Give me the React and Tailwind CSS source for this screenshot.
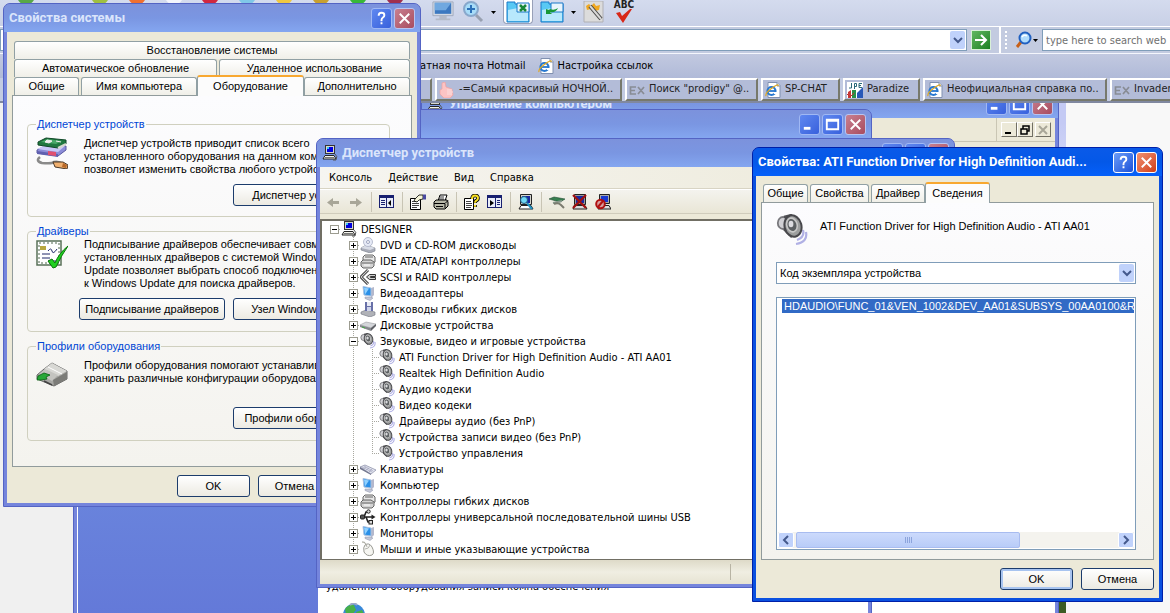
import React from "react";

const TAHOMA = "font-['DejaVu_Sans_Condensed','DejaVu_Sans',sans-serif]";

/* ---------- icons ---------- */

function Svg({ size = 16, box = 16, className = "", children }) {
  return (
    <svg width={size} height={size} viewBox={`0 0 ${box} ${box}`} className={`shrink-0 ${className}`} aria-hidden="true">
      {children}
    </svg>
  );
}

const ComputerIcon = ({ size }) => (
  <Svg size={size}>
    <rect x="3.500" y="0.500" width="9" height="8" fill="#d8d8d0" stroke="#333" strokeWidth="1" />
    <rect x="5" y="2" width="6" height="5" fill="#0000e0" />
    <path d="M5 2h2v2H5z" fill="#38c8f8" />
    <path d="M3 10.500h9l2 3.500H1z" fill="#f4f4ec" stroke="#222" strokeWidth="1" />
    <path d="M3 12.500h9" stroke="#777" />
    <path d="M13 9q3 2 1 6l-3 0" fill="none" stroke="#555" />
  </Svg>
);
const DvdIcon = () => (
  <Svg>
    <path d="M1 11l5-3 9 3v3l-5 2-9-3z" fill="#a8acb8" stroke="#777c88" strokeWidth="0.6" />
    <path d="M1 11l5-3 9 3-5 2z" fill="#d8dce6" />
    <circle cx="8" cy="5" r="4.500" fill="#e6eaf6" stroke="#a8aec4" strokeWidth="0.8" />
    <circle cx="8" cy="5" r="1.500" fill="#fff" stroke="#8890b0" strokeWidth="0.8" />
  </Svg>
);
const ControllerIcon = () => (
  <Svg>
    <path d="M5 2h8l2 2v5l-2 1H5L3 8V4z" fill="#e8e8e8" stroke="#555" strokeWidth="0.9" />
    <path d="M5 4h8" stroke="#666" />
    <path d="M3 7h8l3 2v4l-2 2H3l-2-2V9z" fill="#d4d4d4" stroke="#555" strokeWidth="0.9" />
    <path d="M2 10h11" stroke="#666" />
    <path d="M4 12h6" stroke="#fff" />
  </Svg>
);
const ScsiIcon = () => (
  <Svg>
    <path d="M8 1L1 8l7 7" fill="none" stroke="#222" strokeWidth="2.800" />
    <path d="M8 1L1 8l7 7" fill="none" stroke="#d0d0d0" strokeWidth="1.100" />
    <path d="M15.500 5.500H9.500L6.500 8l3 2.500h6v-2h-5v-1h5z" fill="#d0d0d0" stroke="#222" strokeWidth="0.9" />
  </Svg>
);
const MonitorIcon = () => (
  <Svg>
    <path d="M11 3l3-1v8l-3 3z" fill="#b4b8cc" />
    <path d="M3 1.500l8 1.500v8l-7-1z" fill="#2a90e8" stroke="#a8c0e0" strokeWidth="1" />
    <path d="M4 2.500l5 1-4 6z" fill="#90d0ff" />
    <path d="M5 12l5 0 3 1-3 2.500-5-2z" fill="#c4c8d8" stroke="#8a90a8" strokeWidth="0.5" />
  </Svg>
);
const FloppyIcon = () => (
  <Svg>
    <path d="M1 11l5-2 9 2v3l-5 2-9-3z" fill="#b0b2b8" stroke="#707480" strokeWidth="0.6" />
    <path d="M5 1h8v9H5z" fill="#6870a8" />
    <path d="M7 1h4v4H7z" fill="#e8eaf4" />
    <path d="M7 6h4v4H7z" fill="#cfd4ea" />
  </Svg>
);
const DiskIcon = () => (
  <Svg>
    <path d="M0 8l6-3 10 2-5 4z" fill="#d4d6da" stroke="#8a8c92" strokeWidth="0.5" />
    <path d="M0 8l11 3v3L0 10z" fill="#86888e" />
    <path d="M11 11l5-4v2l-5 5z" fill="#5c5e64" />
    <path d="M2 10l3 1" stroke="#4a4" />
  </Svg>
);
const SpeakerIcon = ({ size = 16 }) => (
  <Svg size={size}>
    <path d="M13.500 8q1 3.500-3 5M15 9q1 5-5 6" fill="none" stroke="#b0b0e4" strokeWidth="1.100" />
    <ellipse cx="3.500" cy="4.500" rx="2.600" ry="3" fill="#d0d0d4" stroke="#78787c" strokeWidth="0.9" />
    <path d="M4 1.500l4-1M4 7.500l4 4" stroke="#505054" strokeWidth="1.300" />
    <ellipse cx="8.500" cy="6" rx="4.200" ry="5.400" fill="#9c9e9e" stroke="#48484c" strokeWidth="1" transform="rotate(-15 8.500 6)" />
    <ellipse cx="8" cy="5.500" rx="2.600" ry="3.500" fill="#5c6062" stroke="#c8c8c8" strokeWidth="0.800" transform="rotate(-15 8 5.500)" />
    <ellipse cx="7.500" cy="5" rx="1.200" ry="1.600" fill="#dcdce0" />
  </Svg>
);
const KeyboardIcon = () => (
  <Svg>
    <path d="M0 6l5-2 11 5-5 4z" fill="#e4e6f0" stroke="#9094ac" strokeWidth="0.8" />
    <path d="M2 6l10 5M4 5l9 5M6 6l-3 2M9 7l-3 2M12 8l-3 3" stroke="#a0a4bc" strokeWidth="0.7" />
    <path d="M0 6v2l11 6v-1z" fill="#70748c" />
  </Svg>
);
const UsbIcon = () => (
  <Svg>
    <path d="M1 8h13M4 8l2-5h3M6 8l2 5h3" fill="none" stroke="#222" strokeWidth="1.600" />
    <rect x="0.500" y="6" width="4" height="4" rx="1" fill="#555" stroke="#222" />
    <circle cx="8.500" cy="2.500" r="1.700" fill="#ddd" stroke="#222" />
    <rect x="9" y="11.500" width="3.500" height="3.500" fill="#ddd" stroke="#222" />
    <path d="M11.500 5.500l4 2.500-4 2.500z" fill="#222" />
  </Svg>
);
const MouseIcon = () => (
  <Svg>
    <path d="M2 1q3-1 4 3" fill="none" stroke="#98988c" />
    <path d="M5 4q4-3 7 2 3 6 0 8-5 2-8-3-1-5 1-7z" fill="#f6f6f2" stroke="#9a9a94" />
    <path d="M5 8q4 0 5-4M7 6L6 3" fill="none" stroke="#b4b4ae" />
  </Svg>
);

const CardsIcon = () => (
  <Svg size={32} box={32}>
    <path d="M4 20q-5 4 2 6 10 1 12-1 5-1 9 2" fill="none" stroke="#8a8a8a" strokeWidth="2.500" />
    <path d="M1 13l8-4 21 0v4l-8 6L1 16z" fill="#8c8cd8" stroke="#5858a0" />
    <path d="M1 12l8-4 20 1-7 6z" fill="#c8c8f8" />
    <path d="M1 14l21 3v3L1 17z" fill="#6060b0" />
    <path d="M12 14l8 1v4l-8-1z" fill="#e05070" />
    <path d="M2 5l8-4 20 2v4l-8 4L2 8z" fill="#207840" stroke="#104828" />
    <path d="M5 5l6-3 15 2-6 3z" fill="#48a868" />
    <path d="M11 3l5 1-3 2-4-1zM20 4l5 1" fill="#eee" stroke="#eee" />
    <path d="M22 11l8-4" stroke="#d8d8d0" strokeWidth="2" />
    <path d="M17 25l10 0 5 3-1 4-12-2z" fill="#f0b070" stroke="#4a3828" />
    <path d="M27 26l4 2-1 3-4-1z" fill="#b86828" />
  </Svg>
);
const CertificateIcon = () => (
  <Svg size={32} box={32}>
    <rect x="1" y="3" width="24" height="24" fill="#fff" stroke="#587058" strokeWidth="1.500" />
    <rect x="3" y="5" width="20" height="20" fill="none" stroke="#506850" strokeDasharray="2 2" />
    <path d="M4 8h6v4H4z" fill="#b8a840" />
    <path d="M12 13q3-4 4 0t5-2M6 16h8M6 20h8M12 23h8" stroke="#202868" fill="none" />
    <path d="M12 23l4-2 3 4q4-10 13-17-7 10-12 21l-3 1z" fill="#20d020" stroke="#087808" />
  </Svg>
);
const DockIcon = () => (
  <Svg size={32} box={32}>
    <path d="M8 10L16 4l15 8v8L18 27 1 20v-4z" fill="#a8a8a4" stroke="#686868" />
    <path d="M8 10l8-6 15 8-9 5z" fill="#d8d8d4" />
    <path d="M3 15l6-5 13 6-6 6z" fill="#c4c4c0" />
    <path d="M12 8l14 7" stroke="#fff" />
    <path d="M17 21l14-8v7l-13 7z" fill="#7c7c78" />
    <path d="M2 17l6-3 6 2-4 2 1 2-6 1-4 0z" fill="#28a838" stroke="#086010" strokeWidth="0.8" />
    <path d="M8 22l8 4" stroke="#444" strokeWidth="1.500" fill="none" />
  </Svg>
);

const ExplorerIcon = ({ size = 16 }) => (
  <Svg size={size}>
    <path d="M3 0.500h9l3 3v12H3z" fill="#fff" stroke="#8090b0" />
    <path d="M12 0v4h3" fill="#dce4f4" stroke="#8090b0" />
    <circle cx="6.500" cy="9" r="4" fill="none" stroke="#2878d0" strokeWidth="2.200" />
    <path d="M3 9h7" stroke="#2878d0" strokeWidth="1.800" />
    <path d="M9 10h4v2H9z" fill="#fff" />
    <path d="M1 14Q0 11 7 6t6-2" fill="none" stroke="#e0a820" strokeWidth="1.200" />
  </Svg>
);
const ThumbIcon = () => (
  <Svg>
    <path d="M3 7V1l3-1 1 5 6 2 1 6-3 3H5l-4-4V8z" fill="#fcc4c4" stroke="#f0a0a0" strokeWidth="0.7" />
    <path d="M8 8h5M8 10h6M8 12h5" stroke="#fce0e0" />
  </Svg>
);
const ExIcon = () => (
  <Svg>
    <path d="M7 5H1.500v7H7M1 8.500h5M9 5l6 7M15 5l-6 7" fill="none" stroke="#888c94" strokeWidth="1.700" />
  </Svg>
);
const JpeIcon = () => (
  <Svg>
    <rect width="16" height="16" fill="#fff" />
    <path d="M1 16v-6l3-2v8z" fill="#c83838" />
    <path d="M5 16V8h4v8z" fill="#2a9048" />
    <path d="M10 16v-5l6-6v11z" fill="#2858b8" />
    <path d="M0 12l3 3 4-4" stroke="#c03030" fill="none" />
    <path d="M4.500 1v5H2M7.500 7V1.500h2v3h-2M15 1.500h-3v4h3M12 3.500h2" stroke="#2a6878" fill="none" />
  </Svg>
);

/* ---------- shared controls ---------- */

const captionGlyphs = {
  help: <path d="M7 7q0-3 3-3t3 2.500q0 1.500-1.500 2.500T10 11.500V13M10 14v2" fill="none" stroke="#fff" strokeWidth="2" />,
  close: <path d="M5 5l10 10M15 5L5 15" stroke="#fff" strokeWidth="2" />,
  min: <path d="M4 14h7" stroke="#fff" strokeWidth="3" />,
  max: <path d="M4 5h12v10H4zM4 6h12" fill="none" stroke="#fff" strokeWidth="2" />,
};

function CaptionButton({ kind, active }) {
  const tone =
    kind === "close"
      ? active
        ? "from-[#f09070] to-[#d03c10] border-[#ffffff]"
        : "from-[#c88090] to-[#a84c60] border-[#b8c4f0]"
      : active
        ? "from-[#6c9cf8] to-[#1c50d8] border-[#ffffff]"
        : "from-[#6088f0] to-[#3860dc] border-[#a0b8f4]";
  return (
    <button aria-label={kind} className={`flex size-[21px] items-center justify-center rounded-[3px] border bg-linear-to-br ${tone}`}>
      <svg width="19" height="19" viewBox="0 0 20 20" aria-hidden="true">
        {captionGlyphs[kind]}
      </svg>
    </button>
  );
}

function Frame({ place, active, title, icon, buttons, children }) {
  return (
    <section
      className={`absolute flex flex-col rounded-t-[7px] border px-[3px] pb-[3px] ${
        active ? "border-[#0020a8] bg-[#0a50e0]" : "border-[#5464c4] bg-[#7585dc]"
      } ${place}`}
    >
      <header
        className={`-mx-[3px] flex h-7 shrink-0 items-center gap-0.5 rounded-t-[6px] px-[5px] font-[Roboto,sans-serif] text-[13px] font-bold whitespace-nowrap ${
          active
            ? "bg-linear-to-b from-[#0a5ae8] via-[#0458e8] to-[#0560fa] text-white"
            : "bg-linear-to-b from-[#7c92dc] via-[#7a96e2] to-[#84a6f0] text-[#dbe5fb]"
        }`}
      >
        {icon}
        <h2 className="min-w-0 flex-1 truncate">{title}</h2>
        {buttons.map((b) => (
          <CaptionButton key={b} kind={b} active={active} />
        ))}
      </header>
      {children}
    </section>
  );
}

function PushButton({ children, className = "", primary }) {
  return (
    <button
      className={`h-[22px] rounded-[3px] border border-[#1c3c6c] bg-linear-to-b from-white to-[#eceae2] whitespace-nowrap ${
        primary ? "shadow-[inset_0_0_0_2px_#a8c4f0]" : ""
      } ${className}`}
    >
      {children}
    </button>
  );
}

function Tab({ children, selected, className = "" }) {
  return (
    <button
      role="tab"
      aria-selected={!!selected}
      className={`rounded-t-[3px] border border-b-0 border-[#91a0a4] whitespace-nowrap ${
        selected
          ? "relative -mb-px h-[21px] border-t-2 border-t-[#f8a830] bg-[#fcfcfc]"
          : "h-[18px] bg-linear-to-b from-white to-[#f0efe8]"
      } ${className}`}
    >
      {children}
    </button>
  );
}

const Chevron = ({ d }) => (
  <svg width="10" height="10" viewBox="0 0 10 10" aria-hidden="true">
    <path d={d} fill="none" stroke="#44598c" strokeWidth="2" />
  </svg>
);
const DOWN = "M1 3l4 4 4-4";
const LEFT = "M7 1L3 5l4 4";
const RIGHT = "M3 1l4 4-4 4";

/* ---------- browser ---------- */

const DropArrow = () => (
  <svg width="5" height="3" viewBox="0 0 5 3" className="shrink-0" aria-hidden="true">
    <path d="M0 0h5L2.500 3z" fill="#000" />
  </svg>
);

const hiddenTools = ["#58a848", "#d8dcec", "#a0c040", "#f07030", "#f4f6fc", "#d02840", "#80c8e8", "#f0c840", "#c8a030", "#38b838", "#a03050"];

const TabPageIcon = ({ kind }) => (
  <svg width="24" height="22" viewBox="0 0 24 22" className="shrink-0" aria-hidden="true">
    <path d="M1 3V1h8v2h14v18H1z" fill="#58c8f4" stroke="#1878c8" />
    <path d="M2 9l20-4v15H2z" fill="#b8e8fc" />
    <path d="M11 2h12v9H11z" fill="#e8f4fc" stroke="#1878c8" />
    {kind === "close" ? (
      <path d="M14 4l6 6M20 4l-6 6" stroke="#188838" strokeWidth="2.500" />
    ) : (
      <path d="M6 8v5h6l-2-2q6 1 8-4-4 3-8 1l-1 1z" fill="#189838" />
    )}
  </svg>
);

function BrowserTab({ icon, children, className = "" }) {
  return (
    <button
      className={`flex h-[23px] shrink-0 items-center gap-1 border-2 border-t-white border-r-[#77796c] border-b-[#77796c] border-l-white bg-[#b3bcd8] pl-0.5 text-left whitespace-nowrap ${className}`}
    >
      {icon}
      <span className="min-w-0 flex-1">{children}</span>
    </button>
  );
}

function Browser() {
  return (
    <div className={`relative bg-[#c3cbe2] text-[11px] text-black ${TAHOMA}`}>
      <div className="flex h-[27px] items-start border-b border-white bg-linear-to-b from-[#d4dbee] to-[#c8d0e6]">
        <div className="flex w-[421px] shrink-0 justify-around px-2">
          {hiddenTools.map((c) => (
            <svg key={c} width="18" height="5" viewBox="0 0 18 5" aria-hidden="true">
              <path d="M1 0h16q-3 5-8 5T1 0z" fill={c} />
            </svg>
          ))}
        </div>
        <div className="flex h-6 items-center gap-[7px] pl-[10px]">
          <svg width="24" height="22" viewBox="0 0 24 24" aria-hidden="true">
            <path d="M1 1h22v15H1z" fill="#d4dae4" stroke="#a0a8bc" />
            <path d="M3 2h18v12H3z" fill="#3c78c0" />
            <path d="M3 2h18l-6 8H3z" fill="#70a8e0" />
            <path d="M8 16h8v3H8zM4 19h16v2H4z" fill="#b4bac8" />
          </svg>
          <svg width="22" height="22" viewBox="0 0 22 22" aria-hidden="true">
            <path d="M14 14l6 6" stroke="#98a0b0" strokeWidth="3" />
            <circle cx="9" cy="8" r="7" fill="#a8dcf8" stroke="#88a8cc" strokeWidth="2" />
            <path d="M9 4v8M5 8h8" stroke="#2c70b8" strokeWidth="2" />
          </svg>
          <DropArrow />
          <div className="flex h-6 w-[30px] shrink-0 items-center justify-center rounded-b border border-t-0 border-[#98a0b8] bg-white">
            <TabPageIcon kind="close" />
          </div>
          <TabPageIcon kind="new" />
          <DropArrow />
          <svg width="22" height="22" viewBox="0 0 22 22" aria-hidden="true">
            <path d="M1 0h19v21H1z" fill="#dcdcdc" stroke="#b0b0b4" />
            <path d="M3 5l3-2 2 2 3-3 2 3 4-1-1 5-5 1-3-2-4 1z" fill="#f0a820" />
            <path d="M7 5l11 13" stroke="#484848" strokeWidth="4" />
            <path d="M7 5l11 13" stroke="#d8d8d8" strokeWidth="2" />
          </svg>
          <div className="flex w-6 flex-col items-center text-[10px] leading-[8px] font-bold text-[#222]">
            ABC
            <svg width="18" height="14" viewBox="0 0 18 14" aria-hidden="true">
              <path d="M1 4l4-1 2 4 8-7 2 0L8 14z" fill="#d82818" />
            </svg>
          </div>
        </div>
      </div>

      <div className="flex h-[27px] items-center border-b border-[#f4f6fc] bg-[#c3cbe0]">
        <div className="flex h-[22px] min-w-0 flex-1 border border-[#7f9db9] bg-white p-px">
          <input aria-label="Адрес" className="min-w-0 flex-1 bg-white pl-1 outline-none" defaultValue="" />
          <button aria-label="Показать список адресов" className="flex w-[15px] items-center justify-center rounded-[2px] bg-[#c0d2fb]">
            <Chevron d={DOWN} />
          </button>
        </div>
        <button aria-label="Переход" className="ml-1 flex size-5 items-center justify-center border border-[#d8f0d8] bg-linear-to-br from-[#60b860] to-[#188020]">
          <svg width="14" height="14" viewBox="0 0 14 14" aria-hidden="true">
            <path d="M1 7h11M7 2l5 5-5 5" fill="none" stroke="#fff" strokeWidth="2" />
          </svg>
        </button>
        <span className="ml-2 h-full w-0.5 bg-white" />
        <span className="ml-1 h-[18px] w-0 border-l-2 border-dotted border-white" />
        <svg width="18" height="18" viewBox="0 0 18 18" className="ml-2" aria-hidden="true">
          <path d="M6 11l-4 5" stroke="#c86018" strokeWidth="3" />
          <circle cx="10" cy="7" r="5.500" fill="#b0dcfc" stroke="#2060c0" strokeWidth="2" />
          <path d="M7 6q2-3 5-1" stroke="#fff" fill="none" strokeWidth="1.500" />
        </svg>
        <span className="mr-1 flex">
          <DropArrow />
        </span>
        <input
          aria-label="Поиск в интернете"
          placeholder="type here to search web"
          className="h-[22px] w-32 border border-r-0 border-[#7f9db9] bg-white pl-[3px] placeholder-[#707070] outline-none"
        />
      </div>

      <nav className="flex h-[24px] items-center gap-3 bg-linear-to-b from-[#c2c9e0] to-[#b0bad8] pl-[389px] whitespace-nowrap">
        <a href="#hotmail">Бесплатная почта Hotmail</a>
        <a href="#links" className="flex items-center gap-1">
          <ExplorerIcon /> Настройка ссылок
        </a>
      </nav>

      <div className="flex h-[25px] items-start gap-[3px] overflow-hidden border-b-2 border-[#8088a0] bg-[#c3cbe2] pl-[379px] text-[#222]">
        <BrowserTab className="w-[53px]" />
        <BrowserTab icon={<ThumbIcon />} className="w-[187px]">-=Самый красивый НОЧНОЙ..</BrowserTab>
        <BrowserTab icon={<ExIcon />} className="w-[133px]">Поиск "prodigy" @..</BrowserTab>
        <BrowserTab icon={<ExplorerIcon />} className="w-[79px]">SP-CHAT</BrowserTab>
        <BrowserTab icon={<JpeIcon />} className="w-[77px]">Paradize</BrowserTab>
        <BrowserTab icon={<ExplorerIcon />} className="w-[184px]">Неофициальная справка по..</BrowserTab>
        <BrowserTab icon={<ExIcon />} className="w-[133px]">Invaders</BrowserTab>
      </div>
    </div>
  );
}

/* ---------- background windows ---------- */

function MdiButton({ label, children }) {
  return (
    <button aria-label={label} className="flex h-[15px] w-4 items-center justify-center border border-t-white border-l-white border-r-[#716f64] border-b-[#716f64] bg-[#ece9d8]">
      <svg width="10" height="10" viewBox="0 0 10 10" aria-hidden="true">{children}</svg>
    </button>
  );
}

function ManagementWindow() {
  return (
    <Frame
      place="left-[421px] top-[89px] bottom-[-20px] w-[638px]"
      title="Управление компьютером"
      icon={<span className="mr-1 flex"><ComputerIcon /></span>}
      buttons={["min", "max", "close"]}
    >
      <div className="flex h-[24px] shrink-0 items-center justify-end border-b border-[#cac6b4] bg-[#ece9d8] pr-1">
        <div className="flex h-full items-center border-l border-[#cac6b4] pl-1">
          <MdiButton label="Свернуть"><path d="M1 8h6" stroke="#000" strokeWidth="2" /></MdiButton>
          <MdiButton label="Восстановить"><path d="M3 4V1h6v5H7M1 4h6v5H1z" fill="none" stroke="#000" strokeWidth="1.500" /></MdiButton>
          <span className="w-0.5" />
          <MdiButton label="Закрыть"><path d="M1 1l8 8M9 1L1 9" stroke="#a8a698" strokeWidth="2" /></MdiButton>
        </div>
      </div>
      <div className="h-2 shrink-0 bg-[#ece9d8]" />
      <div className="flex-1 bg-white" />
    </Frame>
  );
}

function ControlPanelWindow() {
  return (
    <Frame place="left-[73px] top-[109px] bottom-[-20px] w-[799px]" title="" buttons={["min", "max", "close"]}>
      <div className="flex min-h-0 flex-1 border-l border-white bg-white">
        <div className="w-60 bg-linear-to-b from-[#7ba2e7] to-[#6378d8]" />
        <div className={`flex flex-1 flex-col justify-end gap-2 bg-white pb-[2px] pl-2 text-[11px] ${TAHOMA}`}>
          <p className="leading-4">удаленного оборудования записи компа обеспечения</p>
          <svg width="24" height="24" viewBox="0 0 24 24" className="ml-4" aria-hidden="true">
            <circle cx="12" cy="12" r="11" fill="#3888d8" />
            <path d="M3 6q4-5 9-4l2 5-5 6-5-2zM14 9l6-2 3 6-6 5z" fill="#48b048" />
            <path d="M8 2q4-3 7 0" stroke="#9aa8c8" strokeWidth="2" fill="none" />
          </svg>
        </div>
      </div>
    </Frame>
  );
}

/* ---------- system properties ---------- */

function Group({ title, icon, lines, className = "", bodyClass = "", children }) {
  return (
    <fieldset className={`min-w-0 rounded-[4px] border border-[#d0d0bf] pr-[10px] pl-2 ${className}`}>
      <legend className="px-px leading-[14px] text-[#0046d5]">{title}</legend>
      <div className={`flex gap-4 ${bodyClass}`}>
        {icon}
        <p className="leading-[13px] whitespace-nowrap">
          {lines.map((l) => (
            <span key={l} className="block">{l}</span>
          ))}
        </p>
      </div>
      {children}
    </fieldset>
  );
}

function SystemProperties() {
  return (
    <Frame place="left-[3px] top-[3px] w-[418px]" title="Свойства системы" buttons={["help", "close"]}>
      <div className="flex flex-col bg-[#ece9d8] px-[5px] pt-[9px] pb-[6px]">
        <div role="tablist" className="px-0.5">
          <div className="flex">
            <Tab className="flex-1">Восстановление системы</Tab>
          </div>
          <div className="flex gap-0.5">
            <Tab className="w-[203px]">Автоматическое обновление</Tab>
            <Tab className="flex-1">Удаленное использование</Tab>
          </div>
          <div className="flex h-[18px] items-end">
            <Tab className="mr-0.5 w-[65px]">Общие</Tab>
            <Tab className="w-[116px]">Имя компьютера</Tab>
            <Tab selected className="w-[107px]">Оборудование</Tab>
            <Tab className="flex-1">Дополнительно</Tab>
          </div>
        </div>
        <div className="border border-[#919b9c] bg-linear-to-b from-[#fcfcfe] to-[#f4f3ee] px-[14px] pt-[21px] pb-[25px]">
          <Group
            title="Диспетчер устройств"
            className="h-[100px] w-[363px]"
            bodyClass="pt-[6px]"
            icon={<CardsIcon />}
            lines={["Диспетчер устройств приводит список всего", "установленного оборудования на данном компьютере и", "позволяет изменить свойства любого устройства."]}
          >
            <div className="mt-2 flex justify-end">
              <PushButton className="w-[146px]">Диспетчер устройств</PushButton>
            </div>
          </Group>
          <Group
            title="Драйверы"
            className="mt-[7px] h-[108px] w-[363px]"
            icon={<CertificateIcon />}
            lines={["Подписывание драйверов обеспечивает совместимость", "установленных драйверов с системой Windows. Узел Windows", "Update позволяет выбрать способ подключения", "к Windows Update для поиска драйверов."]}
          >
            <div className="mt-2 flex justify-end gap-2">
              <PushButton className="w-[146px]">Подписывание драйверов</PushButton>
              <PushButton className="w-[146px]">Узел Windows Update</PushButton>
            </div>
          </Group>
          <Group
            title="Профили оборудования"
            className="mt-[7px] h-[102px] w-[363px]"
            bodyClass="pt-[6px]"
            icon={<DockIcon />}
            lines={["Профили оборудования помогают устанавливать и", "хранить различные конфигурации оборудования."]}
          >
            <div className="mt-4 flex justify-end">
              <PushButton className="w-[146px]">Профили оборудования</PushButton>
            </div>
          </Group>
        </div>
        <div className="mt-2 flex justify-end gap-2">
          <PushButton className="w-[73px]">OK</PushButton>
          <PushButton className="w-[73px]">Отмена</PushButton>
          <PushButton className="w-[73px]">Применить</PushButton>
        </div>
      </div>
    </Frame>
  );
}

/* ---------- device manager ---------- */

const tree = [
  { name: "DVD и CD-ROM дисководы", icon: DvdIcon },
  { name: "IDE ATA/ATAPI контроллеры", icon: ControllerIcon },
  { name: "SCSI и RAID контроллеры", icon: ScsiIcon },
  { name: "Видеоадаптеры", icon: MonitorIcon },
  { name: "Дисководы гибких дисков", icon: FloppyIcon },
  { name: "Дисковые устройства", icon: DiskIcon },
  {
    name: "Звуковые, видео и игровые устройства",
    icon: SpeakerIcon,
    children: [
      "ATI Function Driver for High Definition Audio - ATI AA01",
      "Realtek High Definition Audio",
      "Аудио кодеки",
      "Видео кодеки",
      "Драйверы аудио (без PnP)",
      "Устройства записи видео (без PnP)",
      "Устройство управления",
    ],
  },
  { name: "Клавиатуры", icon: KeyboardIcon },
  { name: "Компьютер", icon: MonitorIcon },
  { name: "Контроллеры гибких дисков", icon: ControllerIcon },
  { name: "Контроллеры универсальной последовательной шины USB", icon: UsbIcon },
  { name: "Мониторы", icon: MonitorIcon },
  { name: "Мыши и иные указывающие устройства", icon: MouseIcon },
];

const Toggle = ({ open }) => (
  <svg width="11" height="16" viewBox="0 0 11 16" className="shrink-0" aria-hidden="true">
    <path d="M4.500 0v16M9 8.500h2" stroke="#a8a8a0" strokeDasharray="1 1" />
    <rect x="0.500" y="4.500" width="8" height="8" fill="#fff" stroke="#9c9c90" />
    <path d={open ? "M2 8.500h5" : "M2 8.500h5M4.500 6v5"} stroke="#000" />
  </svg>
);
const RootToggle = () => (
  <svg width="11" height="16" viewBox="0 0 11 16" className="shrink-0" aria-hidden="true">
    <path d="M9 8.500h2" stroke="#a8a8a0" strokeDasharray="1 1" />
    <rect x="0.500" y="4.500" width="8" height="8" fill="#fff" stroke="#9c9c90" />
    <path d="M2 8.500h5" stroke="#000" />
  </svg>
);
const Branch = ({ last }) => (
  <svg width="30" height="16" viewBox="0 0 30 16" className="shrink-0" aria-hidden="true">
    <path d={last ? "M4.500 0v16M23.500 0v8M23 8.500h7" : "M4.500 0v16M23.500 0v16M23 8.500h7"} stroke="#a8a8a0" strokeDasharray="1 1" fill="none" />
  </svg>
);

const PaneIcon = ({ right }) => (
  <Svg>
    <path d="M0 1h15v13H0z" fill="#182070" />
    <path d={right ? "M1 4h7v9H1zM9 4h5v9H9z" : "M1 4h6v9H1zM8 4h6v9H8z"} fill="#e8ecf8" />
    <path d={right ? "M3 6l4 3-4 3z" : "M12 6L9 9l3 3z"} fill="#000" />
    <path d={right ? "M10 6.500h3M10 8.500h3M10 10.500h3" : "M2 6.500h4M2 8.500h4M2 10.500h4"} stroke="#182070" />
  </Svg>
);
const toolbar = [
  [
    ["Назад", <Svg key="i"><path d="M14 7H8V4L2 8.500 8 13V10h6z" fill="#a8a698" /></Svg>],
    ["Вперед", <Svg key="i"><path d="M2 7h6V4l6 4.500L8 13V10H2z" fill="#a8a698" /></Svg>],
  ],
  [["Дерево консоли", <PaneIcon key="i" />]],
  [
    ["Свойства", <Svg key="i"><path d="M0.500 4.500h10v11h-10z" fill="#fff" stroke="#000" /><path d="M2 7.500h5M2 9.500h7M2 11.500h7M2 13.500h5" stroke="#444" /><path d="M5 5l4-4h4v4l-4 1-2 2-3-1z" fill="#f4f4d8" stroke="#000" strokeWidth="0.8" /><path d="M13 0.500h3v5h-3z" fill="#4848a0" /></Svg>],
    ["Печать", <Svg key="i"><path d="M5 7l2-6h7l-2 6z" fill="#fff" stroke="#000" /><path d="M7 3h4M6 5h5" stroke="#000" strokeWidth="0.8" /><path d="M1 8l2-2h11l1 2v4l-3 3H3l-2-2z" fill="#b8b8a8" stroke="#000" /><path d="M1 9.500h11l3-3M12 10v4M3 12.500h7" stroke="#000" fill="none" /></Svg>],
  ],
  [
    ["Справка", <Svg key="i"><path d="M0.500 4.500h9v11h-9z" fill="#fff" stroke="#000" /><path d="M2 7.500h5M2 9.500h6M2 11.500h6M2 13.500h5" stroke="#444" /><path d="M8 5q0-3.500 3-3.500t3 2.500q0 2-1.500 2.500T11 9M11 11v2" fill="none" stroke="#000" strokeWidth="3.600" /><path d="M8 5q0-3.500 3-3.500t3 2.500q0 2-1.500 2.500T11 8.700M11 11v1.700" fill="none" stroke="#f8e020" strokeWidth="2" /></Svg>],
    ["Область действий", <PaneIcon key="i" right />],
  ],
  [["Обновить конфигурацию", <Svg key="i"><path d="M2.500 0.500h11v10h-11z" fill="#d4d4cc" stroke="#222" /><path d="M4 2h8v7H4z" fill="#1828a0" /><path d="M3 11.500h10l2 3.500H1z" fill="#fff" stroke="#222" /><circle cx="6" cy="6" r="3.500" fill="#70d8f4" stroke="#205880" /><path d="M9 9l5 6" stroke="#2090c0" strokeWidth="2" /></Svg>]],
  [
    ["Обновить драйвер", <Svg key="i"><path d="M0 5l5-2 11 2-5 3z" fill="#388050" stroke="#204830" strokeWidth="0.6" /><path d="M4 9l9-2" stroke="#88988c" strokeWidth="2" /><path d="M5 10q4-2 7 1l3 3" fill="none" stroke="#7c7c70" strokeWidth="2" /></Svg>],
    ["Удалить", <Svg key="i"><path d="M2.500 0.500h11v10h-11z" fill="#999" stroke="#222" /><path d="M4 2h8v7H4z" fill="#1828a0" /><path d="M2 11.500h11l2 3.500H1z" fill="#ddd" stroke="#222" /><path d="M1 1l13 13M14 1L1 14" stroke="#a01010" strokeWidth="2.200" /></Svg>],
    ["Отключить", <Svg key="i"><path d="M4.500 0.500h10v9h-10z" fill="#aaa" stroke="#222" /><path d="M6 2h7v6H6z" fill="#1838d0" /><path d="M4 11.500h10l2 3.500H3z" fill="#ddd" stroke="#222" /><circle cx="5.500" cy="10" r="4.300" fill="#d8a0a0" stroke="#b01010" strokeWidth="2" /><path d="M3 13l5-6" stroke="#b01010" strokeWidth="2" /></Svg>],
  ],
];

function DeviceManager() {
  return (
    <Frame place="left-[316px] top-[138px] w-[639px]" title="Диспетчер устройств" icon={<span className="mr-0.5 flex"><ComputerIcon /></span>} buttons={["min", "max", "close"]}>
      <div className={`flex flex-col bg-[#ece9d8] text-[11px] ${TAHOMA}`}>
        <div role="menubar" className="flex h-[22px] items-center gap-4 border-b border-[#d8d4c4] bg-linear-to-r from-[#f6f5f1] to-[#ece9d8] pt-0.5 pl-[9px]">
          {["Консоль", "Действие", "Вид", "Справка"].map((m) => (
            <button key={m} role="menuitem">{m}</button>
          ))}
        </div>
        <div role="toolbar" className="flex h-[25px] items-center border-t border-b border-t-white border-b-[#d0ccbc] bg-linear-to-b from-[#f4f3ee] to-[#e9e6d6] pl-[5px]">
          {toolbar.map((group, i) => (
            <div key={i} className={`flex h-5 items-center gap-[7px] ${i ? "ml-[7px] border-l border-[#c8c4b4] pl-[7px]" : ""}`}>
              {group.map(([label, icon]) => (
                <button key={label} aria-label={label}>{icon}</button>
              ))}
            </div>
          ))}
        </div>
        <ul role="tree" className="mt-[5px] h-[341px] overflow-hidden border-t-2 border-b border-l-2 border-[#716f64] bg-white pl-2 leading-4">
          <li className="flex h-4 items-center whitespace-nowrap">
            <RootToggle />
            <ComputerIcon />
            <span className="pt-0.5 pl-1">DESIGNER</span>
          </li>
          {tree.map(({ name, icon: Icon, children }) => (
            <li key={name} className="whitespace-nowrap">
              <div className="ml-[19px] flex h-4 items-center">
                <Toggle open={!!children} />
                <Icon />
                <span className="pt-0.5 pl-1">{name}</span>
              </div>
              {children && (
                <ul className="ml-[19px]">
                  {children.map((c, i) => (
                    <li key={c} className="flex h-4 items-center">
                      <Branch last={i === children.length - 1} />
                      <SpeakerIcon />
                      <span className="pt-0.5 pl-1">{c}</span>
                    </li>
                  ))}
                </ul>
              )}
            </li>
          ))}
        </ul>
        <div className="flex h-6 bg-linear-to-b from-[#dedac8] via-[#f0eee2] to-[#e6e3d2]">
          <span className="my-1 w-[411px] border-r border-[#b8b4a4]" />
        </div>
      </div>
    </Frame>
  );
}

/* ---------- driver properties ---------- */

function DriverProperties() {
  return (
    <Frame active place="left-[752px] top-[147px] w-[411px]" title="Свойства: ATI Function Driver for High Definition Audi..." buttons={["help", "close"]}>
      <div className="flex flex-col bg-[#ece9d8] px-[5px] pt-[6px] pb-2">
        <div role="tablist" className="flex items-end gap-0.5 px-0.5">
          <Tab className="w-[45px]">Общие</Tab>
          <Tab className="w-[59px]">Свойства</Tab>
          <div className="flex items-end">
            <Tab className="w-[54px]">Драйвер</Tab>
            <Tab selected className="w-[65px]">Сведения</Tab>
          </div>
        </div>
        <div className="flex flex-col border border-[#919b9c] bg-linear-to-b from-[#fcfcfe] to-[#f4f3ee] pt-[11px] pr-[17px] pb-[9px] pl-[14px]">
          <div className="flex gap-3">
            <SpeakerIcon size={32} />
            <p className="pt-1 whitespace-nowrap">ATI Function Driver for High Definition Audio - ATI AA01</p>
          </div>
          <div className="relative mt-4 h-[22px]">
            <select aria-label="Параметр" className="h-full w-full appearance-none border border-[#7f9db9] bg-white px-[3px] outline-none">
              <option>Код экземпляра устройства</option>
            </select>
            <span className="pointer-events-none absolute top-0.5 right-0.5 bottom-0.5 flex w-[15px] items-center justify-center rounded-[2px] bg-[#c0d2fb]">
              <Chevron d={DOWN} />
            </span>
          </div>
          <div className="mt-[13px] flex h-[253px] flex-col border border-[#7f9db9] bg-white p-px">
            <div role="listbox" aria-label="Значение" className="min-h-0 flex-1 overflow-hidden pl-1">
              <div role="option" aria-selected="true" className="overflow-hidden bg-[#316ac5] pl-0.5 leading-[14px] whitespace-nowrap text-white">
                HDAUDIO\FUNC_01&amp;VEN_1002&amp;DEV_AA01&amp;SUBSYS_00AA0100&amp;REV_1000
              </div>
            </div>
            <div className="flex h-4 bg-[#f4f3ee]">
              <button aria-label="Прокрутить влево" className="flex w-4 items-center justify-center rounded-[2px] border border-white bg-[#c0d2fb]">
                <Chevron d={LEFT} />
              </button>
              <div className="flex min-w-0 flex-1 px-0.5">
                <div className="flex w-[70%] items-center justify-center gap-px rounded-[2px] border border-[#a8bcf0] bg-linear-to-b from-[#ccdafc] to-[#b8ccf8]">
                  {[0, 1, 2, 3].map((n) => (
                    <span key={n} className="h-[6px] w-px border-r border-[#8ca4dc]" />
                  ))}
                </div>
              </div>
              <button aria-label="Прокрутить вправо" className="flex w-4 items-center justify-center rounded-[2px] border border-white bg-[#c0d2fb]">
                <Chevron d={RIGHT} />
              </button>
            </div>
          </div>
        </div>
        <div className="mt-2 flex justify-end gap-2">
          <PushButton primary className="w-[73px]">OK</PushButton>
          <PushButton className="w-[73px]">Отмена</PushButton>
        </div>
      </div>
    </Frame>
  );
}

export default function App() {
  return (
    <main className="relative min-h-screen w-full overflow-hidden bg-[#f8f8f8] font-['Liberation_Sans',sans-serif] text-[11px] text-black">
      <div className="absolute inset-y-0 left-0 w-[73px] bg-[#f0f0f0]" />
      <div className="absolute inset-y-0 left-[1059px] w-[7px] bg-linear-to-b from-[#c4caf4] from-20% via-[#d8dcf8] via-30% to-[#3c5c24] to-90%" />
      <ManagementWindow />
      <ControlPanelWindow />
      <Browser />
      <SystemProperties />
      <DeviceManager />
      <DriverProperties />
    </main>
  );
}
